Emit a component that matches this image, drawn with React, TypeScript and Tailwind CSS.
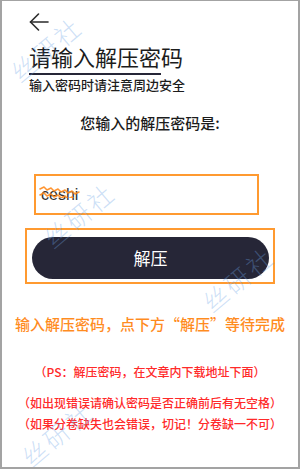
import React from "react";

const Watermark = ({ x, y }: { x: number; y: number }) => (
  <div
    className="absolute pointer-events-none -translate-x-1/2 -translate-y-1/2 rotate-[-40deg] text-[25px] leading-none tracking-[3px] font-light text-[rgba(110,165,230,0.35)] whitespace-nowrap"
    style={{ left: x, top: y }}
  >
    丝研社
  </div>
);

export default function App() {
  return (
    <div className="relative w-[300px] h-[469px] overflow-hidden bg-white border-l-2 border-t border-r-2 border-b-2 border-[#a3a3a3] font-['Noto_Sans_CJK_SC','Noto_Sans',sans-serif] text-[#1c1c1c] flex flex-col">
      {/* header */}
      <div className="flex flex-col items-start pl-[27px] pt-[12px]">
        <svg width="20" height="18" viewBox="0 0 20 18" fill="none" stroke="#2a2a2a" strokeWidth="1.6" strokeLinecap="round" strokeLinejoin="round">
          <path d="M19 9H1.5" />
          <path d="M9.5 1L1.5 9l8 8" />
        </svg>
        <div className="mt-[14px] text-[22px] leading-[22px]">请输入解压密码</div>
        <div className="mt-[6px] w-[132px] h-[2px] bg-[#262637]" />
        <div className="mt-[3px] text-[13px] leading-[13px] font-medium">输入密码时请注意周边安全</div>
      </div>

      {/* question */}
      <div className="mt-[24px] text-center text-[15px] leading-[15px] font-medium">您输入的解压密码是:</div>

      {/* input box */}
      <div className="ml-[32px] mt-[44px] w-[225px] h-[41px] border-2 border-[#ff9a30] flex items-center pl-[5px]">
        <span className="relative font-['Liberation_Sans',sans-serif] text-[16px] text-[#333]">
          ceshi
          <svg className="absolute left-[-2px] top-[3px]" width="46" height="12" viewBox="0 0 46 12" fill="none" stroke="#ff8a1c" strokeWidth="1.6" strokeLinecap="round" strokeLinejoin="round" opacity="0.9">
            <path d="M1 3l4-2 3 3 4-2 3 3 4-2 3 3 4-2 3 3 4-2 3 3 4-2" />
            <path d="M1 9l4-2 3 3 4-2 3 3 4-2 3 3 4-2 3 3 4-2 3 3" />
          </svg>
        </span>
      </div>

      {/* button */}
      <div className="ml-[23px] mt-[13px] w-[250px] h-[56px] border-2 border-[#ff9a30] pl-[5px] pt-[7px]">
        <div className="w-[237px] h-[42px] rounded-full bg-[#262637] flex items-center justify-center text-white text-[17px]">
          解压
        </div>
      </div>

      {/* notes */}
      <div className="flex flex-col items-center whitespace-nowrap font-medium">
        <div className="mt-[32px] text-[15px] leading-[15px] text-[#ff8c1f]">
          输入解压密码，点下方“解压”等待完成
        </div>
        <div className="mt-[35px] text-[12px] leading-[12px] text-[#ff2a2a]">
          （PS：解压密码，在文章内下载地址下面）
        </div>
        <div className="mt-[19px] text-[12px] leading-[12px] text-[#ff2a2a]">
          （如出现错误请确认密码是否正确前后有无空格）
        </div>
        <div className="mt-[9px] text-[12px] leading-[12px] text-[#ff2a2a]">
          （如果分卷缺失也会错误，切记！分卷缺一不可）
        </div>
      </div>

      <Watermark x={44} y={48} />
      <Watermark x={77} y={214} />
      <Watermark x={236} y={278} />
      <Watermark x={55} y={433} />
    </div>
  );
}
